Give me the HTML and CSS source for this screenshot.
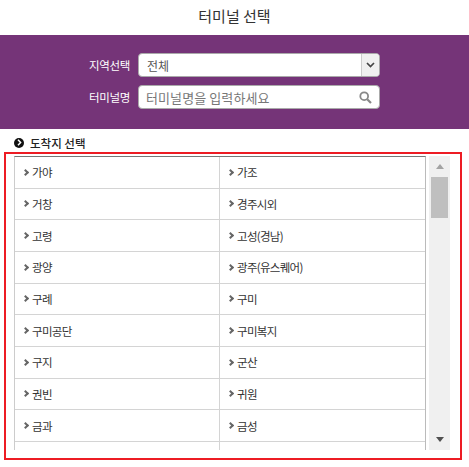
FILE: index.html
```html
<!DOCTYPE html>
<html>
	<head>
		<title>터미널 선택</title>
		<link rel="stylesheet" href="styles.css">
	</head>
	<body>
		<h1 class="page-title">터미널 선택</h1>
		<div class="search-box">
			<div class="search-row">
				<label class="search-label">지역선택</label>
				<div class="field">
					<span class="field-text">전체</span>
					<span class="select-btn">
						<svg width="9" height="6" viewBox="0 0 9 6"><path d="M1 1l3.5 3.5L8 1" fill="none" stroke="#444" stroke-width="1.7"/></svg>
					</span>
				</div>
			</div>
			<div class="search-row">
				<label class="search-label">터미널명</label>
				<div class="field">
					<span class="field-text placeholder">터미널명을 입력하세요</span>
					<svg class="search-icon" width="13" height="13" viewBox="0 0 13 13"><circle cx="5.2" cy="5.2" r="3.9" fill="none" stroke="#888" stroke-width="1.8"/><path d="M8.2 8.2l3.8 3.8" stroke="#888" stroke-width="2.2"/></svg>
				</div>
			</div>
		</div>
		<h2 class="section-title"><span class="bullet"><svg width="5" height="7" viewBox="0 0 5 7"><path d="M1 .8l2.6 2.7L1 6.2" fill="none" stroke="#fff" stroke-width="1.5"/></svg></span>도착지 선택</h2>
		<div class="red-box">
			<div class="list">
				<a class="item">가야</a><a class="item">가조</a>
				<a class="item">거창</a><a class="item">경주시외</a>
				<a class="item">고령</a><a class="item">고성(경남)</a>
				<a class="item">광양</a><a class="item">광주(유스퀘어)</a>
				<a class="item">구례</a><a class="item">구미</a>
				<a class="item">구미공단</a><a class="item">구미복지</a>
				<a class="item">구지</a><a class="item">군산</a>
				<a class="item">권빈</a><a class="item">귀원</a>
				<a class="item">금과</a><a class="item">금성</a>
				<a class="item empty"></a><a class="item empty"></a>
			</div>
			<div class="scrollbar">
				<span class="arrow-up"></span>
				<span class="thumb"></span>
				<span class="arrow-down"></span>
			</div>
		</div>
	</body>
</html>
```
FILE: styles.css
```css
body {
	font-family: "Noto Sans CJK KR", "Noto Sans", sans-serif;
	background-color: #fff;
	color: #222;
	margin: 0;
	padding: 0;
	height: 467px;
	overflow: hidden;
}

.page-title {
	height: 35px;
	margin: 0;
	font-size: 15px;
	font-weight: 400;
	line-height: 31px;
	text-align: center;
	color: #333;
}

.search-box {
	height: 94px;
	box-sizing: border-box;
	padding-top: 18px;
	background-color: #753478;
}

.search-row {
	display: flex;
	align-items: center;
	height: 24px;
	margin-bottom: 8px;
}

.search-label {
	width: 130px;
	color: #fff;
	font-size: 11.5px;
	letter-spacing: -0.3px;
	text-align: right;
}

.field {
	display: flex;
	align-items: center;
	width: 242px;
	height: 24px;
	margin-left: 8px;
	box-sizing: border-box;
	background-color: #fff;
	border: 1px solid #aaa;
	border-radius: 4px;
	overflow: hidden;
}

.field-text {
	flex: 1;
	padding-left: 8px;
	color: #555;
	font-size: 12px;
}

.placeholder {
	color: #777;
	font-size: 13px;
	padding-left: 7px;
	letter-spacing: 0.1px;
}

.select-btn {
	display: flex;
	align-items: center;
	justify-content: center;
	width: 17px;
	height: 100%;
	background-color: #f0f0f0;
	border-left: 1px solid #ccc;
}

.search-icon {
	margin-right: 7px;
}

.section-title {
	display: flex;
	align-items: center;
	height: 23px;
	box-sizing: border-box;
	padding-top: 4px;
	margin: 0 0 0 14px;
	font-size: 11.5px;
	font-weight: 500;
	color: #222;
}

.bullet {
	display: flex;
	align-items: center;
	justify-content: center;
	width: 10px;
	height: 10px;
	margin-right: 6px;
	background-color: #111;
	border-radius: 50%;
}

.red-box {
	display: flex;
	width: 458px;
	height: 308px;
	margin-left: 4px;
	box-sizing: border-box;
	padding: 2px 0 8px 8px;
	border: 2px solid #ed1c24;
}

.list {
	display: grid;
	grid-template-columns: 205px 207px;
	grid-auto-rows: 31.67px;
	width: 412px;
	height: 294px;
	box-sizing: border-box;
	border-top: 1px solid #777;
	border-left: 1px solid #ccc;
	border-right: 1px solid #bbb;
	overflow: hidden;
}

.item {
	display: flex;
	align-items: center;
	box-sizing: border-box;
	padding-left: 8px;
	border-bottom: 1px solid #d4d4d4;
	color: #333;
	font-size: 11.5px;
	letter-spacing: -0.7px;
}

.item:nth-child(odd) {
	border-right: 1px solid #d4d4d4;
}

.item::before {
	content: "";
	width: 3px;
	height: 3px;
	margin: 0 4px 0 0;
	border-top: 2px solid #666;
	border-right: 2px solid #666;
	transform: rotate(45deg);
}

.item.empty::before {
	display: none;
}

.scrollbar {
	display: flex;
	flex-direction: column;
	align-items: center;
	width: 21px;
	height: 294px;
	margin-left: 3px;
	background-color: #f0f0f0;
}

.arrow-up {
	margin-top: 8px;
	border: 4px solid transparent;
	border-top: 0;
	border-bottom: 5px solid #a3a3a3;
}

.thumb {
	width: 17px;
	height: 41px;
	margin-top: 8px;
	background-color: #bfbfbf;
}

.arrow-down {
	margin-top: auto;
	margin-bottom: 8px;
	border: 4px solid transparent;
	border-bottom: 0;
	border-top: 5px solid #505050;
}
```
